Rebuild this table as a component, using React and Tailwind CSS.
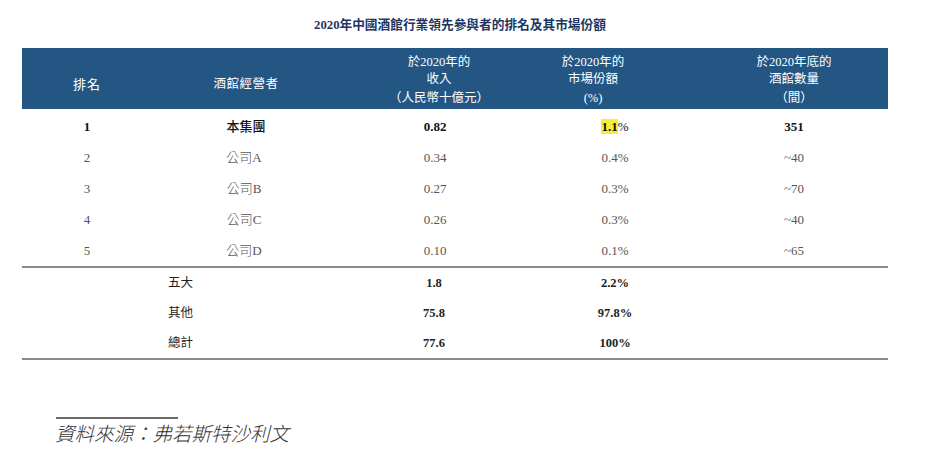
// 2020年中國酒館行業排名表：標題、藍色表頭、明細行、合計行、資料來源
const FONT = "font-['Liberation_Serif','Noto_Sans_CJK_TC',serif]";
const COLS = 'grid grid-cols-[130px_188px_190px_170px_188px]';

const ROWS = [
  ['1', '本集團', '0.82', '1.1', '351', true],
  ['2', '公司A', '0.34', '0.4', '~40'],
  ['3', '公司B', '0.27', '0.3', '~70'],
  ['4', '公司C', '0.26', '0.3', '~40'],
  ['5', '公司D', '0.10', '0.1', '~65'],
];

const TOTALS = [
  ['五大', '1.8', '2.2%'],
  ['其他', '75.8', '97.8%'],
  ['總計', '77.6', '100%'],
];

function HeadCell({ lines, className = '' }) {
  return (
    <div className={`flex flex-col items-center justify-center pt-[4px] text-[12.5px] leading-[17px] ${className}`}>
      {lines.map((l, i) => (
        <span key={i} className={i === 2 ? 'mt-[2px]' : ''}>{l}</span>
      ))}
    </div>
  );
}

export default function App() {
  return (
    <div className={`w-[934px] h-[454px] bg-white text-[#222] ${FONT}`}>
      {/* 標題 */}
      <div className="pt-[16px] pr-[14px] h-[48px] text-center text-[12.7px] font-semibold text-[#1d3563]">
        <span className="font-bold">2020</span>年中國酒館行業領先參與者的排名及其市場份額
      </div>

      <div className="mx-[22px] w-[866px]">
        {/* 表頭 */}
        <div className={`${COLS} h-[61px] bg-[#245684] text-white`}>
          <div className="flex items-center justify-center pt-[12px] text-[13px] tracking-[1px]">排名</div>
          <div className="flex items-center justify-center pt-[12px] text-[12.5px] tracking-[0.5px]">酒館經營者</div>
          <HeadCell lines={['於2020年的', '收入', '（人民幣十億元）']} className="pl-[8px]" />
          <HeadCell lines={['於2020年的', '市場份額', '(%)']} className="pr-[44px]" />
          <HeadCell lines={['於2020年底的', '酒館數量', '（間）']} />
        </div>

        {/* 明細 */}
        <div className="mt-[2px]">
          {ROWS.map(([rank, name, rev, share, count, bold]) => (
            <div
              key={rank}
              className={`${COLS} h-[31px] items-center text-center text-[13px] ${bold ? 'font-bold text-[#111]' : 'text-[#555]'}`}
            >
              <div>{rank}</div>
              <div className={bold ? 'font-medium' : 'font-light pr-[4px]'}>{name}</div>
              <div>{rev}</div>
              <div>
                {bold ? <span className="bg-[#f4f03a]">{share}</span> : share}
                <span className={bold ? 'font-normal' : ''}>%</span>
              </div>
              <div>{count}</div>
            </div>
          ))}
        </div>
        <div className="h-[2px] bg-[#8a8a8a]" />

        {/* 合計 */}
        {TOTALS.map(([label, rev, share]) => (
          <div key={label} className={`${COLS} h-[30px] items-center text-[12.5px] text-[#222]`}>
            <div />
            <div className="pl-[16px]">{label}</div>
            <div className="text-center font-bold pr-[2px]">{rev}</div>
            <div className="text-center font-bold">{share}</div>
            <div />
          </div>
        ))}
        <div className="h-[2px] bg-[#8a8a8a]" />
      </div>

      {/* 資料來源 */}
      <div className="mt-[57px] ml-[56px] w-[122px] h-[2px] bg-[#6b6b6b]" />
      <div className="ml-[55px] mt-[3px] text-[19.5px] italic font-light leading-[26px] text-[#333]">
        資料來源：弗若斯特沙利文
      </div>
    </div>
  );
}
